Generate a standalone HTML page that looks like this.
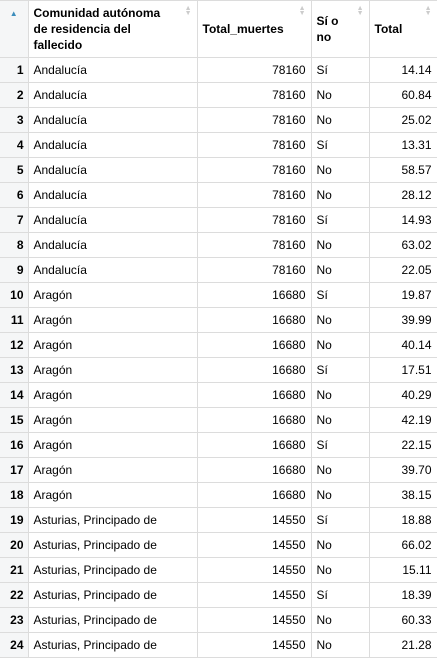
<!DOCTYPE html><html><head><style>
body{margin:0;background:#fff;font-family:"Liberation Sans",sans-serif;font-size:12px;color:#000}
table{border-collapse:collapse;table-layout:fixed;width:437px;position:absolute;left:0;top:0}
td,th{border:1px solid #dcdcdc;padding:0 5px;height:24px;white-space:nowrap;overflow:hidden}
th{height:51px;text-align:left;font-weight:bold;vertical-align:middle;position:relative;white-space:normal;line-height:16px;background:#fff;padding:0 22px 0 5px}
td.n,th.n{background:#f5f6f7;text-align:right;font-weight:bold;padding:0 4px}
.r{text-align:right}
.s{position:absolute;right:5px;top:5px;color:#ccc;font-size:7px;line-height:5px}
tr td:first-child,tr th:first-child{border-left:none}
</style></head><body>
<table>
<colgroup><col style="width:28px"><col style="width:169px"><col style="width:114px"><col style="width:58px"><col style="width:68px"></colgroup>
<tr><th class="n" style="vertical-align:top;text-align:center;color:#3c8dbc;font-size:8px;padding-top:5px">▲</th><th>Comunidad autónoma de residencia del fallecido<span class="s">▲<br>▼</span></th><th>Total_muertes<span class="s">▲<br>▼</span></th><th style="padding-right:14px">Sí o no<span class="s">▲<br>▼</span></th><th>Total<span class="s">▲<br>▼</span></th></tr>
<tr><td class="n">1</td><td>Andalucía</td><td class="r">78160</td><td>Sí</td><td class="r">14.14</td></tr>
<tr><td class="n">2</td><td>Andalucía</td><td class="r">78160</td><td>No</td><td class="r">60.84</td></tr>
<tr><td class="n">3</td><td>Andalucía</td><td class="r">78160</td><td>No</td><td class="r">25.02</td></tr>
<tr><td class="n">4</td><td>Andalucía</td><td class="r">78160</td><td>Sí</td><td class="r">13.31</td></tr>
<tr><td class="n">5</td><td>Andalucía</td><td class="r">78160</td><td>No</td><td class="r">58.57</td></tr>
<tr><td class="n">6</td><td>Andalucía</td><td class="r">78160</td><td>No</td><td class="r">28.12</td></tr>
<tr><td class="n">7</td><td>Andalucía</td><td class="r">78160</td><td>Sí</td><td class="r">14.93</td></tr>
<tr><td class="n">8</td><td>Andalucía</td><td class="r">78160</td><td>No</td><td class="r">63.02</td></tr>
<tr><td class="n">9</td><td>Andalucía</td><td class="r">78160</td><td>No</td><td class="r">22.05</td></tr>
<tr><td class="n">10</td><td>Aragón</td><td class="r">16680</td><td>Sí</td><td class="r">19.87</td></tr>
<tr><td class="n">11</td><td>Aragón</td><td class="r">16680</td><td>No</td><td class="r">39.99</td></tr>
<tr><td class="n">12</td><td>Aragón</td><td class="r">16680</td><td>No</td><td class="r">40.14</td></tr>
<tr><td class="n">13</td><td>Aragón</td><td class="r">16680</td><td>Sí</td><td class="r">17.51</td></tr>
<tr><td class="n">14</td><td>Aragón</td><td class="r">16680</td><td>No</td><td class="r">40.29</td></tr>
<tr><td class="n">15</td><td>Aragón</td><td class="r">16680</td><td>No</td><td class="r">42.19</td></tr>
<tr><td class="n">16</td><td>Aragón</td><td class="r">16680</td><td>Sí</td><td class="r">22.15</td></tr>
<tr><td class="n">17</td><td>Aragón</td><td class="r">16680</td><td>No</td><td class="r">39.70</td></tr>
<tr><td class="n">18</td><td>Aragón</td><td class="r">16680</td><td>No</td><td class="r">38.15</td></tr>
<tr><td class="n">19</td><td>Asturias, Principado de</td><td class="r">14550</td><td>Sí</td><td class="r">18.88</td></tr>
<tr><td class="n">20</td><td>Asturias, Principado de</td><td class="r">14550</td><td>No</td><td class="r">66.02</td></tr>
<tr><td class="n">21</td><td>Asturias, Principado de</td><td class="r">14550</td><td>No</td><td class="r">15.11</td></tr>
<tr><td class="n">22</td><td>Asturias, Principado de</td><td class="r">14550</td><td>Sí</td><td class="r">18.39</td></tr>
<tr><td class="n">23</td><td>Asturias, Principado de</td><td class="r">14550</td><td>No</td><td class="r">60.33</td></tr>
<tr><td class="n">24</td><td>Asturias, Principado de</td><td class="r">14550</td><td>No</td><td class="r">21.28</td></tr>
</table></body></html>
